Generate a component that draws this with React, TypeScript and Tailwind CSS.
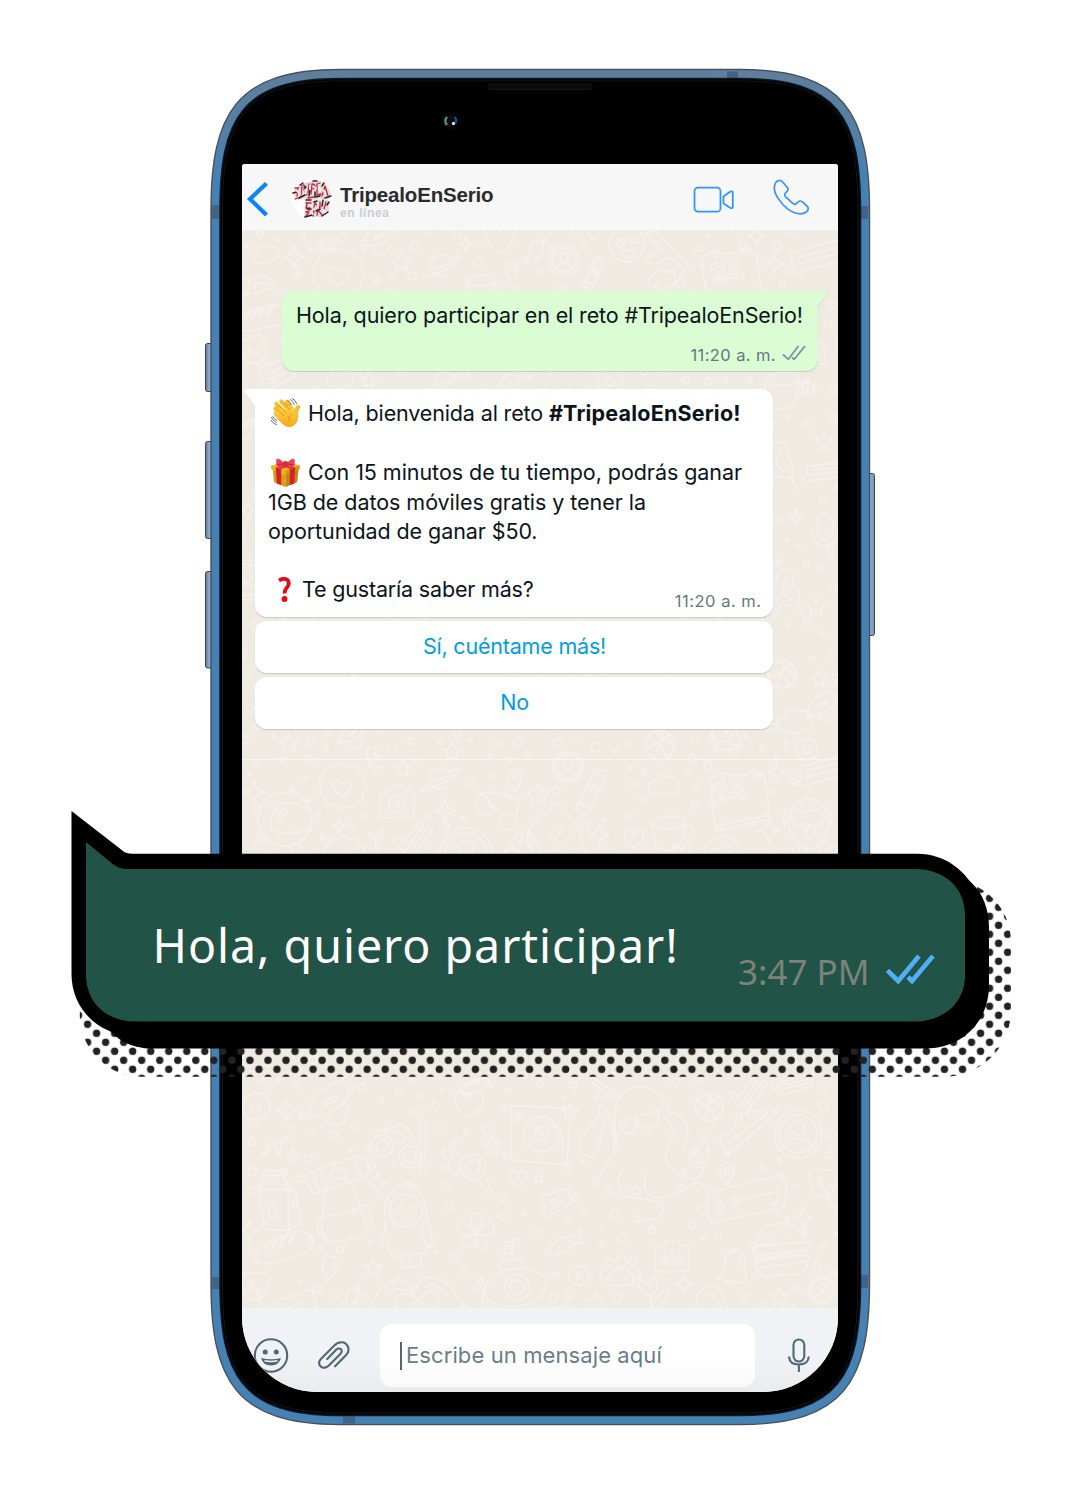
import React from "react";

/* ---------- chat wallpaper ---------- */

const shapes: Record<string, string> = {
  star: "M0-10L3-3L10-2L5 3L6 10L0 6.500L-6 10L-5 3L-10-2L-3-3Z",
  spark: "M0-12Q1-1 11 0Q1 1 0 12Q-1 1-11 0Q-1-1 0-12Z",
  heart: "M0 8C-12 0-8-9-3-7Q0-6 0-3Q1-7 5-7C10-6 9 2 0 8Z",
  gear: "M-4-14Q0-18 4-14Q10-16 11-10Q17-8 14-2Q18 3 13 6Q13 13 6 12Q2 18-3 13Q-9 16-11 9Q-17 7-14 1Q-18-4-13-7Q-12-14-4-14ZM5 0A5 5 0 1 1-5 0A5 5 0 1 1 5 0Z",
  camera: "M-17-9L-8-11L-6-16L6-16L8-11L15-10Q18-9 17-5L17 11Q17 15 13 15L-13 16Q-17 16-17 12ZM8 2A8 8 0 1 1-8 2A8 8 0 1 1 8 2ZM3 2A3 3 0 1 1-3 2A3 3 0 1 1 3 2Z",
  flower: "M-3-5Q-9-18 0-19Q9-18 4-5Q16-13 18-4Q18 4 6 3Q15 14 7 18Q-1 19 0 7Q-6 19-13 14Q-17 7-6 3Q-20 3-18-6Q-13-12-3-5M-5-4L5 4M5-4L-5 5M0-6L0 7",
  planet: "M12-4A12 12 0 1 0 8 9M-15 8C-30 16-14 14 4 4C24-8 28-16 10-8M-14 4Q-4 4 12-5",
  turntable: "M-29-29L28-26Q31-26 30-22L27 28Q27 31 23 31L-29 27Q-32 26-31 22L-31-26ZM18 0A18 18 0 1 1-18 0A18 18 0 1 1 18 0ZM7 0A7 7 0 1 1-7 0A7 7 0 1 1 7 0ZM2 0A2 2 0 1 1-2 0A2 2 0 1 1 2 0M10-9L21-4L22 20M-24-22L-21-17L-24-12L-27-17Z",
  backpack: "M-14-14Q-13-25 0-26Q12-26 16-12L26 17Q30 30 18 34L-2 38Q-14 39-17 28L-16 4ZM-17 12Q5 13 24 2M-16 14Q-23 13-22 22L-20 32L-14 34M22 2L29 0L33 18L27 22M-31-31L18-48Q25-49 28-42L30-34Q30-28 24-26L-20-12Q-27-10-29-16L-33-25Q-34-30-31-31ZM-26-32L-20-13M16-46L23-27M-8-26Q-9-37 0-36Q6-35 6-27M-2 8L0 14M13 3L16 11",
  milk: "M-22-12L-17-27L4-27L8-20L18-7L23 22L10 31L-15 30Z M-22-12L10-12L18-8M10-12L10 30M-16-28L-15-32L6-32L5-27M10-12L5-24M-7 3Q-15 16-7 19Q1 16-7 3M14 2L20-3L20 2L15 6Z",
  astronaut: "M-20 10C-28-30-8-42 3-41C17-40 22-20 24-2L29 18Q30 25 23 25L18 11Q17-1 24-5M-20 4Q-27 18-22 22Q-18 24-16 15M-19 22Q-16 36-8 36L16 32Q24 30 24 24M18-13A17 17 0 1 1-16-13A17 17 0 1 1 18-13M-8 36L-1 42L-5 47L5 47L17 45L17 33M5 34L5 46M-6-15Q-4-19-2-15M4-16Q6-20 8-16M-3-9Q1-4 5-10",
  bread: "M-29 8Q-24-2-13-6L12-16Q28-18 30-8Q31 1 20 6L-14 16Q-27 17-29 8ZM-17 3L-12-8Q-8-10-9-5L-11 2L-4-11Q0-13-1-8L-3-1L4-14Q8-16 8-11L6-4L12-14",
  bolt: "M-5-14L7-13L3-3L9-2L-5 14L-2 3L-8 2Z",
  leaf: "M-15-14Q12-17 15-9Q12 12 2 15L10 24M-15-14Q-18 6-9 12Q-4 17 2 14M-8-5L6 15M-3 1L-4-6M0 5L8 2M-4 2L-9 3",
  note: "M-20-8L20-22L26 2L-14 24L-20 16L-14 13ZM-10 0L8-8M-9 7L12-2M-6 12L8 5",
  hands: "M-50 28Q-54 18-46 14Q-38-14-18-18Q-5-16-4-2Q2-22 16-20Q28-18 36-4L44 6Q56 8 50 20L36 28M-28-3Q-20-13-10-6M8-10Q14-18 28-4M0 24C-28 12-22-6-11-4Q-2-4 1 4Q6-8 16-5Q30 6 0 24M0 15Q-9 8-5 5Q-1 4 0 7Q4 3 7 7Q7 11 0 15",
  bell: "M-16 12Q-9 7-7-5Q-6-17 6-16Q15-14 13-1L15 16ZM0-16Q2-22 6-16M-7 13Q-3 20 2 15M7-9L8-2",
  burger: "M-26-7Q-24-28 0-29Q20-27 22-10ZM-29-5L24-10Q31-5 23-2L-26 3Q-32 0-27-4M-27 4Q-20 10-16 3Q-8 9-4 2Q4 8 9 0Q17 7 25-1M-27 9L25 3Q30 8 22 10L-26 16ZM-25 17Q-19 27-9 24L16 22Q27 18 25 10M-10-18L-8-20M0-22L2-20M8-18L10-15",
  contact: "M25 0A25 25 0 1 1-25 0A25 25 0 1 1 25 0ZM20 0A20 20 0 1 1-20 0A20 20 0 1 1 20 0ZM7-6A7 7 0 1 1-7-6A7 7 0 1 1 7-6ZM-13 15Q-8 3 2 5Q11 6 14 14",
  shoe: "M-27 8Q-9 5-10-14L18-20Q26-24 27-17Q26-11 18-6L-14 23Q-19 25-22 20ZM-20 15L22-16M-5-15L-4-9M2-16L4-10M9-18L10-13M16-20L17-14",
  ball: "M14 0A14 14 0 1 1-14 0A14 14 0 1 1 14 0ZM-12-6Q2-2 7 13M-5-13Q9-6 13 3M-13 4Q3-2 9-11M-6 13Q1 2 2-14",
  pin: "M0 14Q-11 0-7-8Q-2-14 5-9Q11-3 0 14ZM3-3A3 3 0 1 1-3-3A3 3 0 1 1 3-3Z",
  cup: "M-22-8Q-10-19 10-15Q17-9 8-5Q-12 2-22-8L-17 15Q-12 23 0 20Q14 16 12-8M13-5Q22-10 22-1Q22 7 12 7",
  calendar: "M-26-19L-18-21L-15-24L-10-24L-9-21L11-22L14-27L19-26L20-22L26-22L31 16L-21 27ZM-21 27L-19 31L32 20L31 16M-15-24L-12-17M15-26L18-19",
  glasses: "M-20-13Q-23 5-10 7Q-3 3-7-5L6 5Q-1 16 8 21Q19 20 19 8L22-8L7-16M-20-13Q-12-18-7-5M6 5Q12 4 19 8M-18-15Q2-20 12-10",
  glue: "M-17 19L1-18L4-21L13-18L12-13L-5 25Q-15 25-17 19ZM1-18L12-13M-5-4L7 2M-14 13L-3 19M1-6Q-5 2 0 3Q5 2 1-6",
  smiley: "M17 0A17 17 0 1 1-17 0A17 17 0 1 1 17 0ZM-7 3Q-13-1-9-5Q-7-5-6-3Q-4-7-2-4Q-3 1-7 3M5-1Q1-4 4-8Q7-9 8-6Q11-8 12-4Q10 0 5-1M-5 7L7 5Q8 13 1 13Q-4 12-5 7",
  envelope: "M-25-8L2-34Q5-36 8-33L25-12L34 24L-17 32ZM-25-8L-12 14L4 12Q10 4 25-10M4 12L34 24M-12 14L-17 32M-5 0L4-12M1 2L10-10M-25-8Q-28 0-23 12",
  owl: "M-20 0Q-17-22 2-22Q21-19 21 2Q18 22 4 29Q-17 23-20 0ZM-3-7Q-14-18-17-3Q-13 9-2 3Q15 8 17-4Q8-16-3-7ZM-5 3L-2 11L3 4M-4 13L2 19L8 8M-8 26Q-15 36-3 38Q3 32-3 28M12 25Q10 35 17 32Q21 23 16 20M-19-10Q-27-12-23 5M20-10Q27-8 22 6",
  cloud: "M-16 5Q-20-3-10-6Q-5-17 4-10Q16-14 16-3Q19 7 8 8Q0 14-8 8Q-14 10-16 5Z",
  fish: "M-24 8Q-14-10 5-11L16-18L14-8L20-2L9-4Q-5 14-24 8ZM-11-1Q-5 2-9 9M-18 4L-17 5M0-6L6-4",
  bike: "M-9 14A11 11 0 1 1-31 14A11 11 0 1 1-9 14ZM-14 14A6 6 0 1 1-26 14A6 6 0 1 1-14 14M19 25A11 11 0 1 1-3 25A11 11 0 1 1 19 25ZM14 25A6 6 0 1 1 2 25A6 6 0 1 1 14 25M-28 0Q-7-5-4-7Q8-9 12 10M-20 0Q0-4 4 8L-5 12M8-24Q20-21 24-8L24 25L18 22M8-24Q9-18 15-16Q19-10 18 14",
  magnifier: "M13-5A13 13 0 1 1-13-5A13 13 0 1 1 13-5ZM7-5A7 7 0 1 1-7-5A7 7 0 1 1 7-5M6 9L16 24Q20 24 19 19L12 5M-12-2L-20 2Q-27-4-23-11M-8-16L-18-20Q-22-30-14-30M-26-12Q-34-16-28-22Q-21-22-21-14",
  ticket: "M-39-10L38-29Q36-21 41-20L38 4L-34 20L-38 14ZM-27-4L-29 7L-24 12L-22 3ZM-13-7L-6-3L-13 3ZM1-4L33-12M25-1L29 3L33-7",
  robot: "M14-42C-2-48-20-40-22-20Q-23 0-20 18M14-42Q28-35 32-18M-18-8L22-20L22-8Q14 2 4-4L-1-11Q0 2-9 4Q-17 2-18-8M32-18Q48-18 52 2L48 20Q60 40 68 3Q78 24 64 48Q48 54 32 36Q25 24 38 4L30-12M-24 2Q-28-8-34-8Q-36 12-45 28Q-60 26-58 10L-46-6Q-38-16-38-20Q-40-30-34-22Q-20-8-24 22L-42 54M-14 40Q-26 56-12 68L16 72Q34 78 20 90L0 94M10 44Q2 66 22 70L50 60Q62 52 64 46",
  eye: "M-38 10Q-30-14 4-14Q34-12 31 8Q24 28-8 28Q-36 27-38 10ZM13 7A14 14 0 1 1-15 7A14 14 0 1 1 13 7M7 7A8 8 0 1 1-9 7A8 8 0 1 1 7 7M-20-12L-22-19Q-10-27 4-23L6-14M-16-24L-14-43L-6-44L-6-25M-15-37L-6-39M-16-30L-6-32M-37 14Q-47 0-41-4Q-36 0-37 14Q-44 30-36 29",
  check: "M-16-2L-11-6L-5 2L12-22L17-19L-4 12ZM5 8L22-17L27-14L6 16L1 12",
  music: "M-6 8L-3-9L10-12L7 5M-6 8Q-12 5-11 10Q-7 14-6 8M7 5Q1 3 2 8Q6 10 7 5",
  scallop: "M-6-22Q0-28 6-21Q14-25 16-16Q24-16 21-7Q28-1 21 5Q22 14 14 14Q10 22 3 18Q-5 24-9 16Q-18 18-17 9Q-26 5-20-2Q-26-10-18-13Q-17-23-6-22ZM0 9Q-14-2-8-7Q-3-9 0-4Q6-10 9-4Q11 1 0 9Z",
  helmet: "M27 0A27 27 0 1 1-27 0A27 27 0 1 1 27 0ZM-14 12Q-16-8-2-16Q14-18 24-8M-14 12Q4 16 26 11M-8 2Q-7-8 0-11Q3-10 0-4L-6 4Z",
  squirrel: "M-10 12Q-20-4-6-22Q8-24 5-7Q13-2 10 14ZM-2-14Q-8 2-2 4L3 8M-8 14L-14 25M9 14L16 25",
  mic: "M-6-15Q-3-20 4-17Q9-12 8-2Q7 8 1 8Q-7 7-8-2ZM-13 0Q-12 14 3 14Q15 8 13-3M2 14L5 27L9 26L7 13",
  rocket: "M-28 16Q-25-10 2-20Q16-18 13-4Q2 12-28 16ZM-12 0L2-6Q4-2-10 4ZM-10 14Q-10 22 2 24Q14 20 12 4M6-19Q10-30 18-33M13-11L30-20",
  person: "M-14 16Q-14 0 0 0Q13 0 14 15Q0 20-14 16ZM6-8A6 6 0 1 1-6-8A6 6 0 1 1 6-8M-13 11L-22 9Q-22-2-12 0M13 10L22 9Q20-2 12-1M-10-4Q-18-4-15-10Q-8-12-8-8M10-4Q18-4 15-10Q8-12 8-8",
  plant: "M0 16L-1-2Q-15-6-12-18L-3-12L2-20Q10-10-1-2M0 10Q4-6 15-7Q16 4 0 12M-8 14Q-16 14-14 22",
  cane: "M-23 19L-16 14Q-20 4-14-10Q0-22 10-8L20 20Q17 26 13 20L5 0Q1-10-10-6",
  plane: "M-20-20L24 14L20 18L0 7L-15 18L-27 16L-9 0L-30-15Z",
  book: "M-24-3L26-17L28 4L-20 18L-28 16L-22 10ZM-16 1L20-8M-17 8L24-3",
};

type Mark = [string, number, number, number?, number?];

const marks: Mark[] = [
  ["cloud", 266, 255, 0.75, -10], ["spark", 294, 257, 1], ["star", 401, 261, 1], ["planet", 441, 266, 0.9],
  ["heart", 500, 238, 1.9], ["music", 534, 252, 1], ["spark", 466, 244, 0.7], ["rocket", 382, 238, 0.7, 10],
  ["scallop", 338, 276, 1.1], ["bread", 262, 318, 0.9, 6], ["pin", 512, 271, 0.8], ["squirrel", 259, 286, 0.7, 90],
  ["contact", 564, 260, 0.6], ["glue", 595, 272, 0.7], ["smiley", 627, 244, 1.05], ["plane", 670, 251, 0.9, 10],
  ["calendar", 729, 276, 1.05], ["spark", 774, 264, 0.9], ["book", 815, 256, 1], ["cloud", 662, 280, 0.8],
  ["spark", 757, 236, 0.8], ["cup", 484, 288, 0.8], ["heart", 594, 232, 0.9], ["camera", 812, 352, 0.8],
  ["cup", 786, 388, 1], ["leaf", 255, 350, 0.9, -30], ["note", 275, 374, 0.8], ["cloud", 340, 380, 0.8],
  ["star", 369, 379, 0.8], ["planet", 445, 382, 0.8], ["fish", 516, 380, 0.8], ["gear", 610, 382, 0.8],
  ["star", 824, 441, 0.9], ["star", 808, 386, 0.9], ["mic", 825, 532, 1], ["book", 823, 471, 0.7, 10],
  ["squirrel", 782, 464, 1], ["spark", 796, 517, 0.7], ["squirrel", 788, 592, 1], ["star", 816, 607, 0.9],
  ["ball", 782, 674, 1], ["star", 819, 678, 0.8], ["cloud", 795, 722, 1], ["rocket", 826, 705, 0.7],
  ["gear", 807, 750, 0.7], ["ball", 660, 745, 1.05], ["star", 289, 743, 0.9], ["star", 452, 751, 0.9],
  ["bolt", 372, 757, 0.7], ["envelope", 724, 735, 0.5], ["contact", 247, 580, 0.8], ["spark", 248, 510, 0.8],
  ["bread", 247, 430, 0.7], ["rocket", 355, 734, 0.6],
  ["star", 403, 768, 0.8], ["planet", 440, 779, 0.9], ["pin", 515, 779, 0.9], ["contact", 568, 767, 0.6],
  ["scallop", 342, 788, 1], ["spark", 254, 792, 1], ["helmet", 285, 819, 1], ["camera", 397, 802, 1],
  ["spark", 445, 811, 1], ["glasses", 497, 809, 1], ["star", 538, 794, 1.1], ["glue", 593, 790, 1],
  ["cloud", 664, 786, 0.9], ["calendar", 737, 798, 1.05], ["book", 821, 770, 0.9], ["spark", 777, 772, 0.8],
  ["spark", 339, 826, 0.7], ["plane", 379, 840, 0.4, 70], ["check", 408, 842, 0.9], ["contact", 466, 854, 1.05],
  ["star", 512, 852, 0.8], ["envelope", 553, 838, 1], ["spark", 599, 835, 0.9], ["heart", 634, 838, 1.2],
  ["cup", 672, 831, 0.95], ["smiley", 722, 853, 1], ["owl", 808, 821, 1], ["spark", 769, 831, 1],
  ["flower", 296, 860, 0.9], ["scallop", 344, 860, 0.95], ["plant", 685, 862, 1],
  ["gear", 256, 1107, 0.9], ["spark", 286, 1110, 1], ["rocket", 335, 1102, 1], ["bike", 402, 1132, 1],
  ["plane", 278, 1142, 0.4, -60], ["spark", 293, 1155, 0.7], ["backpack", 339, 1204, 1], ["milk", 279, 1201, 0.95],
  ["astronaut", 405, 1223, 0.95], ["spark", 377, 1183, 0.9], ["bread", 283, 1248, 1], ["spark", 249, 1231, 0.9],
  ["bolt", 330, 1270, 1], ["star", 373, 1267, 0.9], ["leaf", 256, 1286, 0.9], ["note", 293, 1310, 0.95],
  ["music", 351, 1297, 0.8], ["hands", 417, 1298, 1.05], ["heart", 469, 1104, 1.8], ["magnifier", 473, 1172, 1],
  ["star", 493, 1146, 0.9], ["turntable", 541, 1134, 0.98], ["star", 570, 1111, 0.8], ["heart", 518, 1178, 1.1],
  ["flower", 476, 1232, 1], ["eye", 518, 1281, 0.9], ["note", 555, 1202, 0.65], ["fish", 567, 1246, 0.9],
  ["gear", 579, 1276, 0.65], ["person", 621, 1269, 0.95], ["robot", 637, 1130, 0.98], ["star", 595, 1302, 1],
  ["camera", 672, 1256, 1], ["plant", 652, 1298, 1.1], ["spark", 684, 1284, 0.8], ["cane", 713, 1301, 0.95],
  ["ball", 709, 1107, 1], ["check", 743, 1096, 0.9], ["shoe", 746, 1129, 1], ["contact", 798, 1134, 0.95],
  ["book", 795, 1084, 0.6], ["pin", 727, 1173, 0.9], ["ticket", 746, 1203, 1], ["spark", 803, 1218, 0.9],
  ["burger", 782, 1252, 1], ["bell", 732, 1267, 1], ["star", 779, 1297, 0.9], ["contact", 822, 1290, 0.55],
  ["plane", 607, 1090, 0.5], ["leaf", 824, 1183, 0.9], ["bread", 474, 1086, 0.5], ["planet", 525, 1333, 0.9],
  ["planet", 780, 1333, 0.9], ["calendar", 553, 1325, 0.8], ["cloud", 292, 1340, 0.9], ["rocket", 590, 1345, 1],
];

const reach: Record<string, number> = {
  star: 13, spark: 13, heart: 14, bolt: 15, music: 12, cloud: 18, pin: 14, robot: 58, backpack: 38, turntable: 40, hands: 42, ticket: 32, eye: 34, astronaut: 36,
};

const rings = (() => {
  const out: [number, number, number][] = [];
  let seed = 41;
  const next = () => {
    seed = (seed * 16807) % 2147483647;
    return seed / 2147483647;
  };
  for (let i = 0; i < 5000; i++) {
    const x = 242 + next() * 596;
    const y = 230 + next() * 1078;
    const r = 1.6 + next() * 2.8;
    const clear =
      marks.every(([k, mx, my, s = 1]) => Math.hypot(mx - x, my - y) > (reach[k] ?? 27) * s + r) &&
      out.every(([ox, oy, or]) => Math.hypot(ox - x, oy - y) > or + r + 9);
    if (clear) out.push([x, y, r]);
  }
  return out;
})();

function Wallpaper() {
  return (
    <svg className="absolute inset-0" width="596" height="1078" viewBox="242 230 596 1078" fill="none" stroke="#f5f1ea" strokeWidth="1.7" strokeLinecap="round" strokeLinejoin="round" aria-hidden="true">
      {marks.map(([k, x, y, s = 1, r = 0], i) => (
        <path key={i} d={shapes[k]} transform={`translate(${x} ${y}) rotate(${r}) scale(${s})`} vectorEffect="non-scaling-stroke" />
      ))}
      {rings.map(([x, y, r], i) => (
        <circle key={i} cx={x} cy={y} r={r} />
      ))}
      <g fontFamily="Inter, sans-serif" fontWeight="700" fontSize="27" strokeWidth="1.5">
        <text x="713" y="804" transform="rotate(-10 713 804)">24</text>
        <text x="711" y="284" transform="rotate(-8 711 284)">24</text>
        <text x="315" y="251" fontSize="18">42</text>
      </g>
      <path d="M242 759.500H838" stroke="#f8f5ef" strokeWidth="1" />
    </svg>
  );
}

/* ---------- phone body ---------- */

function body(i: number) {
  const l = 211 + i, r = 869.5 - i, t = 69.500 + i, b = 1424.500 - i;
  const h = 129 - i, v = 141 - i, c = 44 - i * 0.4, d = 25 - i * 0.4;
  return `M${l} ${t + v}C${l} ${t + c} ${l + d} ${t} ${l + h} ${t}H${r - h}C${r - d} ${t} ${r} ${t + c} ${r} ${t + v}V${b - v}C${r} ${b - c} ${r - d} ${b} ${r - h} ${b}H${l + h}C${l + d} ${b} ${l} ${b - c} ${l} ${b - v}Z`;
}

function PhoneBody() {
  return (
    <svg className="absolute inset-0" width="1080" height="1494" viewBox="0 0 1080 1494" fill="none" aria-hidden="true">
      <defs>
        <linearGradient id="metal" x1="0" y1="69" x2="0" y2="1425" gradientUnits="userSpaceOnUse">
          <stop offset="0" stopColor="#5f7f9b" />
          <stop offset="0.03" stopColor="#587fa2" />
          <stop offset="0.08" stopColor="#4681b4" />
          <stop offset="1" stopColor="#4681b4" />
        </linearGradient>
        <linearGradient id="key" x1="0" y1="0" x2="1" y2="0">
          <stop offset="0" stopColor="#5d7592" />
          <stop offset="0.45" stopColor="#8fb0d2" />
          <stop offset="1" stopColor="#6f8fb2" />
        </linearGradient>
      </defs>
      <g fill="url(#key)" stroke="#3c4656" strokeWidth="1">
        <rect x="205.500" y="343.500" width="8" height="48" rx="2" />
        <rect x="205.500" y="441.500" width="8" height="97" rx="2" />
        <rect x="205.500" y="571.500" width="8" height="96.500" rx="2" />
        <rect x="866.500" y="473.500" width="8" height="162" rx="2" />
      </g>
      <path d={body(0)} fill="#4681b4" stroke="#4b4f55" strokeWidth="1.4" />
      <path d={body(5)} stroke="url(#metal)" strokeWidth="8" />
      <g fill="#3f6488">
        <rect x="212" y="205" width="7" height="14" />
        <rect x="861" y="206" width="7" height="13" />
        <rect x="727" y="71.500" width="11" height="7" />
        <rect x="343" y="1416.500" width="12" height="7" />
        <rect x="212" y="1277" width="7" height="12" />
        <rect x="861" y="1275" width="7" height="13" />
      </g>
      <path d={body(9)} fill="#000" stroke="#0d1826" strokeWidth="1.5" />
      <path d={body(11.500)} stroke="#161617" strokeWidth="1" />
      <rect x="488" y="84" width="104" height="5.500" rx="2.700" fill="#0a0a0a" stroke="#171717" />
      <circle cx="450.500" cy="121" r="10" fill="#050506" />
      <circle cx="450.500" cy="121" r="6.500" fill="#090c11" />
      <path d="M447 117a6 6 0 0 0 0 8" stroke="#5c8a74" strokeWidth="2.600" />
      <path d="M454.500 117a5 5 0 0 1 1 6" stroke="#1d4f96" strokeWidth="2" />
      <circle cx="453.500" cy="123.500" r="1.700" fill="#cfd6ff" />
    </svg>
  );
}

/* ---------- header ---------- */

function Avatar() {
  return (
    <svg width="40" height="42" viewBox="0 0 40 42" aria-hidden="true">
      <circle cx="20" cy="21" r="20" fill="#fdfdfd" />
      <g fill="none" strokeLinecap="round" strokeLinejoin="round">
        <path d="M2 12L8 7L13 5L21 3L29 3L35 8L39 15L38 21L30 21L22 22L13 21L3 22ZM13 23L36 22L37 33L28 39L12 39Z" fill="#e6dcda" stroke="none" />
        <path d="M3 10H8M6 11L5 18M10 8L9 17M11 7Q15 8 12 12L15 17M17 6L16 15M20 6L19 16M21 6Q25 7 21 11M28 5L25 6L25 17L29 16M30 18L33 8L36 18M3 21L9 19M16 20L22 19M14 25H19M15 26L14 30L18 30M22 29L23 25L28 30V24M14 34L18 33L14 38M21 38L22 33M25 37L26 32L30 37M34 24L32 31" stroke="#c8253a" strokeWidth="1.300" />
        <path d="M1 15L5 14M7 20L13 17M12 10L14 9M17 18L18 12M23 14L23 19L28 18M30 8L32 5M33 20L39 18M14 22L19 22M22 24L25 23M31 22L30 28M15 31H19M13 39L20 37M24 33L28 31M30 38L36 34M37 24L35 27M8 7L11 5M21 3L25 3" stroke="#2a2225" strokeWidth="1.500" />
        <path d="M5 13L8 16M13 12L14 15M22 9L24 10M31 12L33 15M17 27L20 28M26 26L26 29M18 34L21 36M31 32L33 34M8 10L7 14M27 9L28 13M18 8L18 11" stroke="#f6f1f0" strokeWidth="1.800" />
      </g>
    </svg>
  );
}

function ChatHeader() {
  return (
    <header className="flex h-[66px] shrink-0 items-center bg-[#f7f7f7] pl-1 pr-7">
      <svg className="mt-1.5" width="24" height="36" viewBox="0 0 24 36" fill="none" stroke="#0a84ff" strokeWidth="4.200" aria-hidden="true">
        <path d="M20.500 1.500L4 17L20.500 33" />
      </svg>
      <div className="ml-[22px] mt-1">
        <Avatar />
      </div>
      <div className="ml-2 flex flex-1 flex-col pt-[10.5px] font-['Liberation_Sans',Arial,sans-serif] font-bold">
        <span className="text-[20.500px] leading-[22px] tracking-[-0.18px] text-[#2b2b2d]">TripealoEnSerio</span>
        <span className="text-[12px] leading-[14px] tracking-[0.6px] text-[#c9ced6]">en línea</span>
      </div>
      <svg className="mt-[5px] mr-[38px]" width="42" height="28" viewBox="0 0 42 28" fill="none" stroke="#3396ff" strokeWidth="1.800" strokeLinejoin="round" aria-hidden="true">
        <rect x="1.500" y="1.700" width="26" height="24" rx="3.500" />
        <path d="M30.500 10.500L37 5.800Q39.800 4.500 39.800 7V20.500Q39.800 23 37 21.700L30.500 17.500Z" />
      </svg>
      <svg width="37" height="37" viewBox="700 355 110 112" fill="none" stroke="#3396ff" strokeWidth="5.200" strokeLinejoin="round" aria-hidden="true">
        <path d="M706 368C710 358 722 357 728 364L742 380C746 385 745 390 739 395C733 400 733 405 738 410L758 428C763 433 768 433 772 427C778 420 784 420 790 426L802 437C808 443 806 450 800 455C785 465 765 460 745 447C720 428 704 400 703 385C703 376 704 372 706 368Z" />
      </svg>
    </header>
  );
}

/* ---------- emoji drawings ---------- */

function Wave() {
  return (
    <svg className="shrink-0" width="31" height="31" viewBox="0 0 32 32" aria-hidden="true">
      <defs>
        <linearGradient id="skin" x1="0" y1="0" x2="0" y2="1">
          <stop offset="0" stopColor="#ffd54a" />
          <stop offset="1" stopColor="#f5a81c" />
        </linearGradient>
      </defs>
      <g fill="none" stroke="#f9bd2c" strokeLinecap="round">
        <path d="M5.500 11L14 20M6.500 6L16 16M11.500 3.500L19 12M17.500 4L23 12" strokeWidth="4" />
        <path d="M27 19Q25.500 14 29 9.500" strokeWidth="4.500" />
      </g>
      <path d="M7 13Q9 10 12 12L20 8Q24 10 26 15L29 17Q30 25 24 29Q17 32 11 25L4 17Q3 13 7 13Z" fill="url(#skin)" />
      <path d="M8 12L14 18M9.500 8L17 15.500M15 5.500L20.500 12M22 17Q18 20 20 24" fill="none" stroke="#dc8a10" strokeWidth="0.900" strokeLinecap="round" />
      <path d="M21 1.500Q24 3 25 6.500M18.500 2.500Q21 4 22 7M23 0.500Q26.500 2 27.500 6M1.500 20Q3 24 6.500 25M1 23Q3 27 7 27.500M3 19Q4 22 7 23" fill="none" stroke="#6d6d6d" strokeWidth="1" strokeLinecap="round" />
    </svg>
  );
}

function Gift() {
  return (
    <svg className="shrink-0" width="31" height="31" viewBox="0 0 32 32" aria-hidden="true">
      <path d="M1.500 9L16 4L31 9L16 16Z" fill="#f4b92d" />
      <path d="M3 12L16 17V31L4 26Z" fill="#dc9a12" />
      <path d="M16 17L29.500 12L28 26L16 31Z" fill="#c98208" />
      <path d="M1 8.500L16 14.500V19L1.500 13Z" fill="#f0b022" />
      <path d="M31 8.500L16 14.500V19L30.500 13Z" fill="#d9940f" />
      <path d="M6 10.500L11.500 12.700V29L7 27.300ZM20.500 12.700L26 10.500L25 27.300L20.500 29Z" fill="#d3202d" />
      <path d="M6 10.500L20 6L24 7.500L11.500 12.700ZM8 6.500L12 5.500L26 10.500L20.500 12.700Z" fill="#e8394a" />
      <path d="M15 7Q9 0 6.500 2.500L6.500 8.500Q10 11 15 8.500ZM17 7Q23 0 25.500 2.500L25.500 8.500Q22 11 17 8.500Z" fill="#ec4156" />
      <path d="M8 8L14 7M24 8L18 7" stroke="#b81c30" strokeWidth="0.900" />
      <rect x="13.500" y="4.500" width="5" height="6" rx="1.800" fill="#d82b42" />
    </svg>
  );
}

function Question() {
  return (
    <svg className="shrink-0" width="14" height="26" viewBox="0 0 14 26" fill="none" aria-hidden="true">
      <path d="M1 3.500Q6 0.500 9.500 3Q12.500 7 8.500 11Q6.500 13.500 6.700 16.500" stroke="#e60a14" strokeWidth="3.800" />
      <circle cx="6.500" cy="22" r="3" fill="#e60a14" />
    </svg>
  );
}

/* ---------- messages ---------- */

function OutgoingMessage() {
  return (
    <div className="relative ml-[40px] mt-[61px] flex h-[79.5px] w-[536px] flex-col rounded-xl rounded-tr-none bg-[#dafdd4] shadow-[0_1px_1px_rgba(11,20,26,0.16)]">
      <svg className="absolute left-[535px] top-0" width="12" height="18" viewBox="0 0 12 18" aria-hidden="true">
        <path d="M0 0H9Q12 1 10 4L0 17.500Z" fill="#cfdcc8" />
        <path d="M0 0H9Q12 1 10 3L0 16Z" fill="#dafdd4" />
      </svg>
      <p className="ml-[14px] mt-[9px] whitespace-nowrap text-[21.500px] leading-[30px] tracking-[-0.13px] text-[#0b141a]">
        Hola, quiero participar en el reto #TripealoEnSerio!
      </p>
      <div className="mr-3 mt-[14px] flex items-center justify-end gap-1.5 text-[#667781]">
        <span className="whitespace-nowrap text-[16.500px] leading-[22px] tracking-[0.4px]">11:20 a. m.</span>
        <svg className="-mt-1" width="24" height="16" viewBox="0 0 24 16" fill="none" stroke="#7d909a" strokeWidth="1.700" aria-hidden="true">
          <path d="M1 9.500L6.300 14.300L16.500 1M9.800 12.500L12.200 14.300L23 1" />
        </svg>
      </div>
    </div>
  );
}

function IncomingMessage() {
  return (
    <div className="relative ml-[12.500px] mt-[18px] h-[228px] w-[518px] rounded-xl rounded-tl-none bg-white text-[#0b141a] shadow-[0_1px_1px_rgba(11,20,26,0.16)]">
      <svg className="absolute -left-[11px] top-0" width="12" height="18" viewBox="0 0 12 18" aria-hidden="true">
        <path d="M12 0H2.500Q-0.500 1 1.500 4L12 17.500Z" fill="#fff" />
      </svg>
      <div className="flex flex-col whitespace-nowrap pl-[13.500px] pt-[10px] text-[21.500px] leading-[29.600px] tracking-[-0.05px]">
        <p className="flex h-[29.600px] items-center gap-[7px] pl-[2px]">
          <Wave />
          <span className="tracking-[-0.14px]">
            Hola, bienvenida al reto <b className="font-bold tracking-[0.2px]">#TripealoEnSerio!</b>
          </span>
        </p>
        <p className="mt-[29.600px] flex h-[29.600px] items-center gap-[7px] pl-[2px]">
          <Gift />
          <span>Con 15 minutos de tu tiempo, podrás ganar</span>
        </p>
        <p className="mt-[0.6px]">1GB de datos móviles gratis y tener la</p>
        <p className="-mt-[0.2px] tracking-[-0.08px]">oportunidad de ganar $50.</p>
        <div className="mt-[21px] flex items-center justify-between pr-[11px]">
          <p className="flex items-center gap-[10px] pl-[10px]">
            <Question />
            <span className="tracking-[-0.18px]">Te gustaría saber más?</span>
          </p>
          <span className="mt-[22px] text-[16.500px] leading-[22px] tracking-[0.5px] text-[#667781]">11:20 a. m.</span>
        </div>
      </div>
    </div>
  );
}

function Reply({ children }: { children: React.ReactNode }) {
  return (
    <button className="ml-[12.500px] flex h-[51.500px] w-[518px] items-center justify-center rounded-xl bg-white pb-[1px] pl-0.5 text-[21.500px] leading-none tracking-[-0.2px] text-[#009de2] shadow-[0_1px_1px_rgba(11,20,26,0.16)]">
      {children}
    </button>
  );
}

/* ---------- composer ---------- */

function Composer() {
  return (
    <footer className="flex h-[84px] shrink-0 items-start bg-linear-to-b from-[#f0f2f5] from-60% to-[#e9ebed] pl-[11px] pt-4">
      <svg className="mt-[13px]" width="36" height="36" viewBox="0 0 36 36" fill="none" stroke="#4f6872" strokeWidth="2.100" aria-hidden="true">
        <circle cx="18" cy="18.500" r="16.200" />
        <circle cx="12.200" cy="15" r="2.500" fill="#4f6872" stroke="none" />
        <circle cx="23.300" cy="15" r="2.500" fill="#4f6872" stroke="none" />
        <path d="M8 21Q18 23.500 28 21Q26 28.500 18 28.500Q10 28.500 8 21ZM9 22.800H27" fill="#4f6872" stroke="none" />
        <path d="M11.500 23.800Q18 25.300 24.500 23.800" stroke="#f0f2f5" strokeWidth="1.600" />
      </svg>
      <svg className="ml-[28px] mt-[16px]" width="34" height="30" viewBox="355 213 96 84" fill="none" stroke="#4f6872" strokeWidth="6" strokeLinecap="round" strokeLinejoin="round" aria-hidden="true">
        <path d="M406 287L438 254C450 241 442 219 424 219C415 219 410 222 404 228L366 266C354 280 366 294 380 290C384 289 386 287 390 283L420 253C431 241 420 232 409 240L384 266" />
      </svg>
      <div className="ml-[29px] flex h-[63px] w-[375px] items-center rounded-xl bg-linear-to-b from-white from-60% to-[#f9f9f9] pl-5">
        <span className="h-[28px] w-[2px] bg-[#54656f]" />
        <span className="ml-1 whitespace-nowrap text-[22px] tracking-[0.1px] text-[#667f8a]">Escribe un mensaje aquí</span>
      </div>
      <svg className="ml-[33px] mt-[13px]" width="22" height="36" viewBox="0 0 22 36" fill="none" stroke="#4f6872" strokeWidth="2.100" aria-hidden="true">
        <rect x="5.500" y="2.500" width="10.800" height="22" rx="5.400" />
        <path d="M1 19.500Q1.500 27.500 10.900 27.500Q20.300 27.500 20.800 19.500M10.900 27.500V35" />
      </svg>
    </footer>
  );
}

/* ---------- large speech bubble ---------- */

function BigBubble() {
  return (
    <div className="absolute left-[71px] top-[811px] h-[267px] w-[941px]">
      <svg className="absolute inset-0" width="941" height="267" viewBox="71 811 941 267" aria-hidden="true">
        <defs>
          <pattern id="dots" x="141.700" y="1046.800" width="18.040" height="18" patternUnits="userSpaceOnUse">
            <circle cx="9" cy="4.500" r="3.700" fill="#222" />
            <circle cx="0" cy="13.500" r="3.700" fill="#222" />
            <circle cx="18.040" cy="13.500" r="3.700" fill="#222" />
          </pattern>
        </defs>
        <path d="M80 940H900V880H949A62 62 0 0 1 1011 942V1010A67 67 0 0 1 944 1076.800H142A62 62 0 0 1 80 1010Z" fill="url(#dots)" />
        <path d="M82 860H915C965 866 989 890 989 928V985C989 1022 962 1048.500 925 1048.500H147C126 1046 118 1039 108 1029Z" />
        <path d="M71.500 811L123 851Q126 853.700 132 853.700H917C946 853.700 967 872 976 892Q979 900 979 918V972C979 1010 952 1036 917 1036H135C98 1036 71.500 1008 71.500 974Z" />
        <path d="M86 842L112 863.500Q119 869 127 869H915C945 869 965 888 965 915V976C965 1002 944 1021.500 915 1021.500H135C106 1021.500 86 1002 86 975Z" fill="#215346" />
      </svg>
      <div className="relative flex h-full items-start font-['Noto_Sans','Open_Sans',sans-serif]">
        <span className="ml-[81.5px] mt-[102px] w-[585.5px] whitespace-nowrap text-[46.5px] leading-[64px] tracking-[0.98px] text-white">Hola, quiero participar!</span>
        <span className="mt-[136.5px] w-[148px] whitespace-nowrap text-[35px] leading-[48px] text-[#7b837a]">3:47 PM</span>
        <svg className="mt-[142px]" width="50" height="34" viewBox="886 953 50 34" fill="none" stroke="#4fb0f6" strokeWidth="4.600" aria-hidden="true">
          <path d="M887.500 970.500L898.200 981L919 956M908 977L912 981L933 956" />
        </svg>
      </div>
    </div>
  );
}

export default function App() {
  return (
    <main className="relative h-[1494px] w-[1080px] overflow-hidden bg-white">
      <PhoneBody />
      <div className="relative pl-[242px] pt-[164px] font-['Inter',sans-serif]">
        <section className="flex h-[1228px] w-[596px] flex-col overflow-hidden rounded-t-[3px] rounded-b-[75px] bg-white">
          <ChatHeader />
          <div className="relative flex-1 bg-[#efeae2]">
            <Wallpaper />
            <div className="relative flex flex-col">
              <OutgoingMessage />
              <IncomingMessage />
              <div className="mt-[4.500px] flex flex-col gap-[4.500px]">
                <Reply>Sí, cuéntame más!</Reply>
                <Reply>No</Reply>
              </div>
            </div>
          </div>
          <Composer />
        </section>
      </div>
      <BigBubble />
    </main>
  );
}
